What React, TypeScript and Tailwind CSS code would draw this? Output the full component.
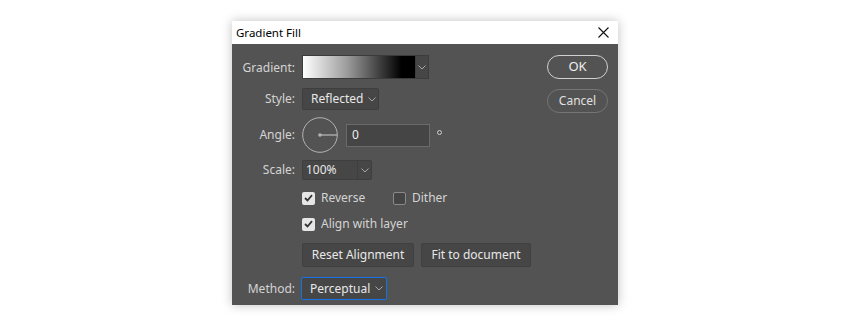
import React from "react";

const Chevron = ({ className = "" }: { className?: string }) => (
  <svg width="8" height="5" viewBox="0 0 8 5" className={className}>
    <polyline points="0.5,0.5 4,4 7.5,0.5" fill="none" stroke="#a8a8a8" strokeWidth="1" />
  </svg>
);

const Check = ({ checked }: { checked: boolean }) =>
  checked ? (
    <div className="w-[13px] h-[13px] rounded-[2px] bg-[#e6e6e6] flex items-center justify-center">
      <svg width="9" height="8" viewBox="0 0 9 8">
        <polyline points="1,4 3.5,6.5 8,1.2" fill="none" stroke="#333" strokeWidth="1.8" />
      </svg>
    </div>
  ) : (
    <div className="w-[13px] h-[13px] rounded-[2px] bg-[#454545] border border-[#8a8a8a]" />
  );

const Label = ({ children }: { children?: React.ReactNode }) => (
  <div className="w-[64px] shrink-0 text-right pr-[1px]">{children}</div>
);

export default function App() {
  return (
    <div
      className="w-[850px] h-[327px] bg-white pl-[232px] pt-[21px]"
      style={{ fontFamily: '"Noto Sans", "Segoe UI", sans-serif' }}
    >
      <div className="w-[386px] h-[284px] flex flex-col shadow-[0_0_10px_rgba(0,0,0,0.25)]">
        <div className="h-[23px] bg-white flex items-center justify-between pl-[4px] pr-[9px] text-[11.5px] text-black">
          <span>Gradient Fill</span>
          <svg width="11" height="11" viewBox="0 0 11 11">
            <path d="M0.5 0.5 L10.5 10.5 M10.5 0.5 L0.5 10.5" stroke="#111" strokeWidth="1.1" />
          </svg>
        </div>
        <div className="flex-1 bg-[#535353] flex text-[12px] text-[#d4d4d4]">
          <div className="flex flex-col pt-[11px]">
            <div className="flex items-center h-[24px]">
              <Label>
                <span className="relative top-[1px]">Gradient:</span>
              </Label>
              <div className="ml-[6px] flex h-[24px] w-[127px] border border-[#3c3c3c] bg-[#464646]">
                <div className="flex-1 bg-[linear-gradient(to_right,#ffffff_0%,#9a9a9a_40%,#2a2a2a_75%,#000000_88%)]" />
                <div className="w-[13px] border-l border-[#3c3c3c] flex items-center justify-center">
                  <Chevron />
                </div>
              </div>
            </div>
            <div className="flex items-center h-[22px] mt-[9px]">
              <Label>Style:</Label>
              <div className="ml-[6px] flex items-center h-[22px] w-[77px] rounded-[2px] border border-[#3e3e3e] bg-[#464646] pl-[8px] text-[#e8e8e8]">
                <span>Reflected</span>
                <Chevron className="ml-[5px]" />
              </div>
            </div>
            <div className="flex items-center h-[36px] mt-[7px]">
              <Label>Angle:</Label>
              <svg width="36" height="36" viewBox="0 0 36 36" className="ml-[6px]">
                <circle cx="18" cy="18" r="17.3" fill="none" stroke="#b4b4b4" strokeWidth="1" />
                <circle cx="18" cy="18" r="1.8" fill="#b4b4b4" />
                <line x1="18" y1="18" x2="35" y2="18" stroke="#b4b4b4" strokeWidth="1.3" />
              </svg>
              <div className="ml-[8px] h-[23px] w-[84px] border border-[#6a6a6a] bg-[#454545] flex items-center pl-[5px] text-[#eeeeee]">
                0
              </div>
              <div className="ml-[7px] self-start mt-[13px] w-[5px] h-[5px] rounded-full border border-[#cfcfcf]" />
            </div>
            <div className="flex items-center h-[20px] mt-[7px]">
              <Label>Scale:</Label>
              <div className="ml-[6px] flex h-[20px] w-[70px] rounded-[2px] border border-[#3e3e3e] bg-[#464646] text-[#e8e8e8]">
                <div className="flex-1 flex items-center pl-[3px]">100%</div>
                <div className="w-[14px] border-l border-[#3e3e3e] flex items-center justify-center">
                  <Chevron />
                </div>
              </div>
            </div>
            <div className="flex items-center h-[16px] mt-[10px]">
              <Label />
              <div className="ml-[6px] flex items-center w-[91px]">
                <Check checked />
                <span className="ml-[6px]">Reverse</span>
              </div>
              <div className="flex items-center">
                <Check checked={false} />
                <span className="ml-[6px]">Dither</span>
              </div>
            </div>
            <div className="flex items-center h-[16px] mt-[10px]">
              <Label />
              <div className="ml-[6px] flex items-center">
                <Check checked />
                <span className="ml-[6px]">Align with layer</span>
              </div>
            </div>
            <div className="flex items-center h-[24px] mt-[11px]">
              <Label />
              <div className="ml-[6px] h-[24px] w-[112px] rounded-[2px] border border-[#404040] bg-[#464646] flex items-center justify-center text-[#e8e8e8]">
                Reset Alignment
              </div>
              <div className="ml-[7px] h-[24px] w-[110px] rounded-[2px] border border-[#404040] bg-[#464646] flex items-center justify-center text-[#e8e8e8]">
                Fit to document
              </div>
            </div>
            <div className="flex items-center h-[23px] mt-[10px]">
              <Label>Method:</Label>
              <div className="ml-[5px] flex items-center h-[23px] w-[86px] rounded-[2px] border border-[#1473e6] bg-[#464646] pl-[8px] text-[#e8e8e8]">
                <span>Perceptual</span>
                <Chevron className="ml-[5px]" />
              </div>
            </div>
          </div>
          <div className="ml-auto mr-[10px] pt-[11px] flex flex-col">
            <div className="h-[24px] w-[61px] rounded-full border-[1.5px] border-[#d0d0d0] flex items-center justify-center text-[13px] text-[#eeeeee]">
              OK
            </div>
            <div className="mt-[10px] h-[24px] w-[61px] rounded-full border-[1.5px] border-[#757575] flex items-center justify-center text-[#e0e0e0]">
              Cancel
            </div>
          </div>
        </div>
      </div>
    </div>
  );
}
